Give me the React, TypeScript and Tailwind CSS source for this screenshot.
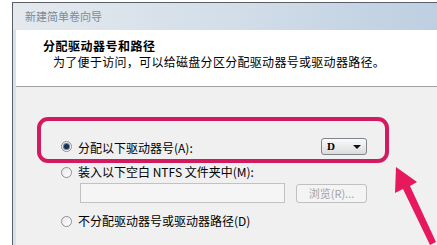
import React from 'react';

const font = { fontFamily: '"Noto Sans CJK SC", "Liberation Sans", sans-serif' };

const Radio = ({ checked = false }: { checked?: boolean }) => (
    <span className="w-[11px] h-[11px] rounded-full border border-[#8e8f8f] bg-gradient-to-br from-[#e8e8e8] to-[#ffffff] flex items-center justify-center shrink-0">
        {checked && <span className="w-[5px] h-[5px] rounded-full bg-[#1c2f45] ring-1 ring-[#5d7fa6]" />}
    </span>
);

const App = () => {
    return (
        <div className="relative w-[437px] h-[245px] overflow-hidden bg-white pl-[12px] pt-[2px] text-[#000]" style={font}>
            {/* window */}
            <div className="flex flex-col h-full border-l border-t border-[#5a5f66]">
                <div className="h-[27px] shrink-0 flex items-center pl-[12px] bg-gradient-to-r from-[#e4e9ee] via-[#d3dee9] to-[#bdcfe1] text-[11px] text-[#7c8a99]">
                    新建简单卷向导
                </div>
                <div className="flex-1 flex flex-col pl-[3px] bg-[#d9e1e9]">
                    <div className="h-[57px] shrink-0 bg-white border-b border-[#a0a0a0] pl-[27px] pt-[7px]">
                        <div className="text-[12px] font-bold leading-[18px] tracking-[0.5px]">分配驱动器号和路径</div>
                        <div className="text-[12px] leading-[14px] pl-[10px] tracking-[0.3px]">
                            为了便于访问，可以给磁盘分区分配驱动器号或驱动器路径。
                        </div>
                    </div>
                    <div className="flex-1 bg-[#f0f0f0] pl-[45px] pt-[51px] text-[12px]">
                        <div className="w-[306px] h-[17px] flex items-center">
                            <Radio checked />
                            <span className="ml-[6px] leading-[14px] mt-[3px]">分配以下驱动器号(A):</span>
                            <div className="ml-auto w-[46px] h-[17px] rounded-[3px] border border-[#7f858c] bg-gradient-to-b from-[#fafafa] to-[#dcdcdc] flex items-center justify-between pl-[5px] pr-[5px]">
                                <span className="text-[11px] font-bold leading-none" style={{ fontFamily: '"Liberation Serif", serif' }}>D</span>
                                <span className="w-0 h-0 border-l-[4px] border-r-[4px] border-t-[4px] border-l-transparent border-r-transparent border-t-[#111]" />
                            </div>
                        </div>
                        <div className="mt-[10px] h-[14px] flex items-center">
                            <Radio />
                            <span className="ml-[6px] leading-[14px]">装入以下空白 NTFS 文件夹中(M):</span>
                        </div>
                        <div className="mt-[4px] pl-[19px] flex items-center gap-[11px]">
                            <div className="w-[205px] h-[20px] border border-[#c2c2c2] bg-[#f5f5f5]" />
                            <div className="w-[71px] h-[19px] rounded-[3px] border border-[#c0c0c0] bg-[#f4f4f4] flex items-center justify-center text-[11px] text-[#a3a3a3]">
                                浏览(R)...
                            </div>
                        </div>
                        <div className="mt-[11px] h-[14px] flex items-center">
                            <Radio />
                            <span className="ml-[6px] leading-[14px]">不分配驱动器号或驱动器路径(D)</span>
                        </div>
                    </div>
                </div>
            </div>

            {/* annotation */}
            <div className="absolute left-[37px] top-[117px] w-[352px] h-[46px] border-4 border-[#d41a5f] rounded-[11px]" />
            <svg className="absolute left-0 top-0" width="437" height="245" viewBox="0 0 437 245">
                <polygon points="396,167 417,182 410,186 436,242 430,245 403,189 395,193" fill="#e6195d" />
            </svg>
        </div>
    );
};

export default App;
